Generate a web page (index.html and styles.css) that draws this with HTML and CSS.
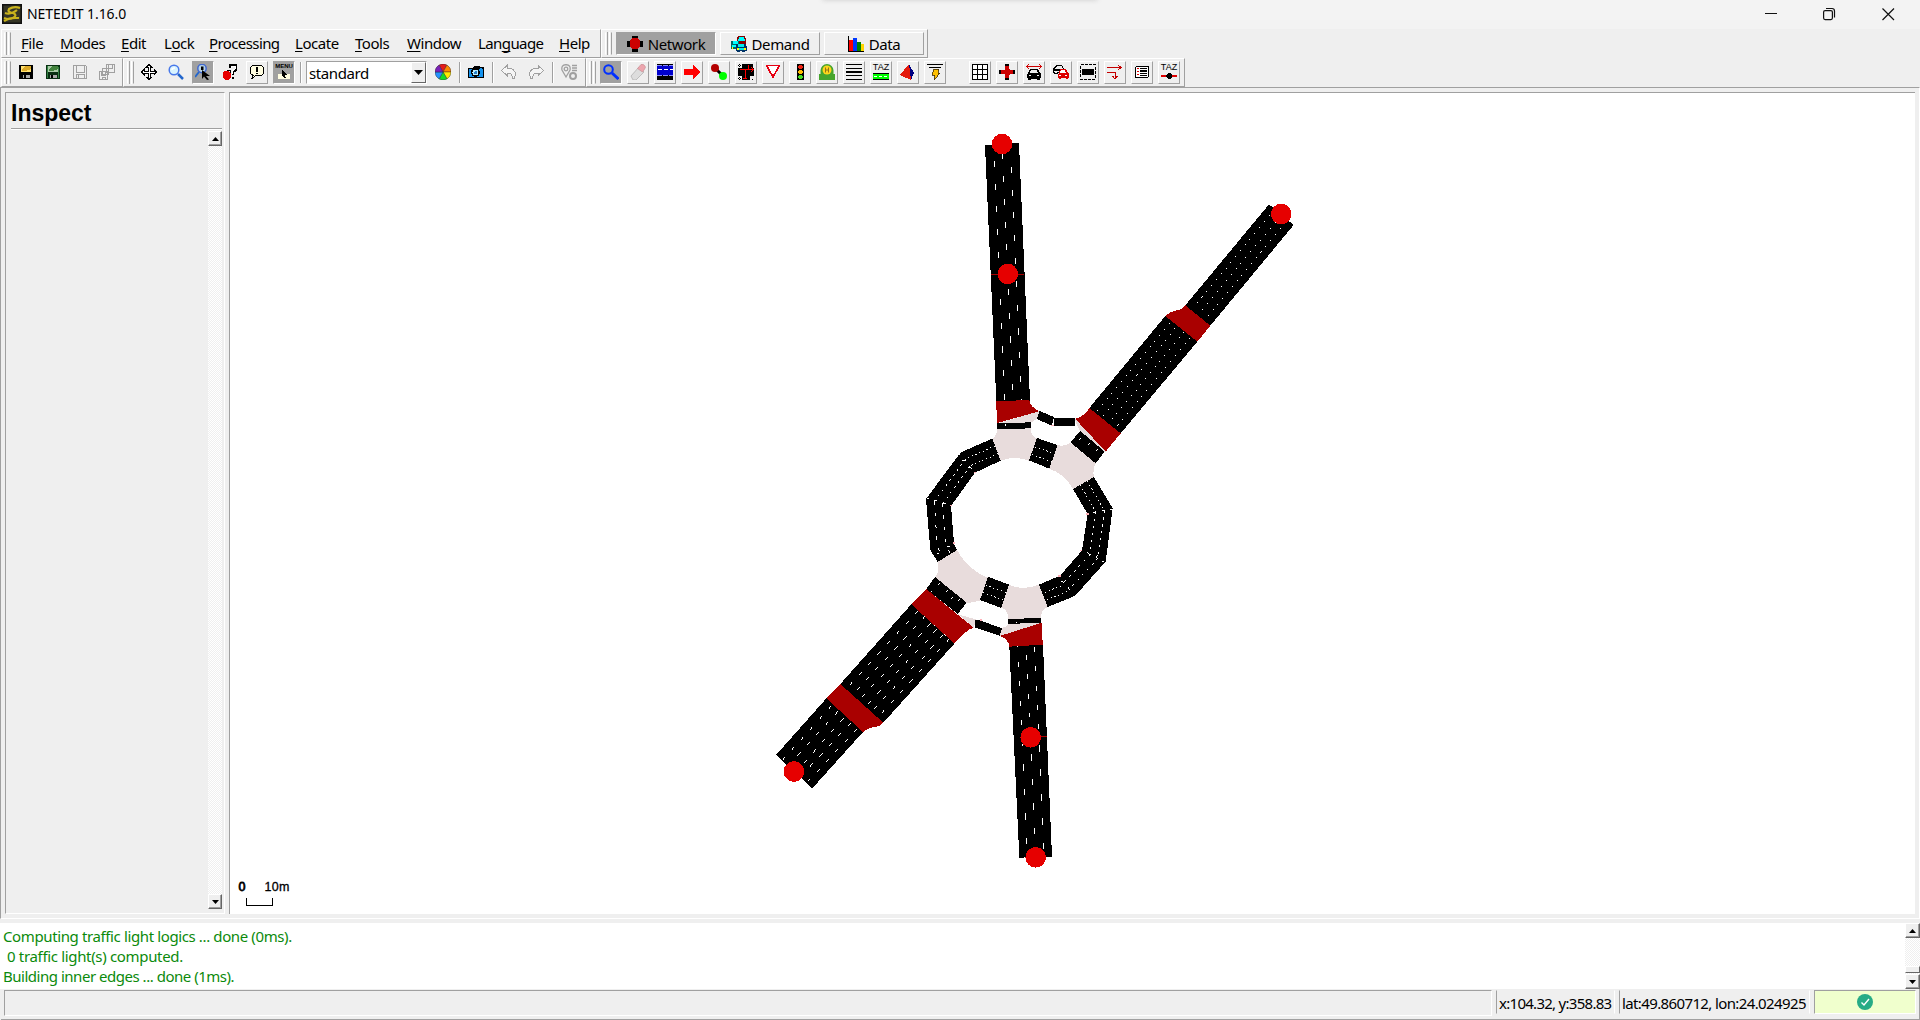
FILE: index.html
```html
<!DOCTYPE html>
<html lang="en">
<head>
<meta charset="utf-8">
<title>NETEDIT 1.16.0</title>
<link rel="stylesheet" href="styles.css">
</head>
<body>
<header class="titlebar">
  <svg class="logo" width="20" height="20" viewBox="0 0 20 20"><rect width="20" height="20" fill="#111"/><rect x="1.5" y="1.5" width="17" height="17" fill="#353525"/><path d="M18 4Q12 2 7 5Q5 8 11 9Q16 11 11 14Q7 16 2 14M3 9Q9 11 15 6M2 17Q8 13 17 14" fill="none" stroke="#c9b31c" stroke-width="2.200"/></svg>
  <span class="title">NETEDIT 1.16.0</span>
  <span class="top-hint"></span>
  <svg class="winctl" width="132" height="14" viewBox="0 0 132 14"><g fill="none" stroke="#111" stroke-width="1.2"><path d="M0 6.5H12" shape-rendering="crispEdges"/><rect x="58.6" y="3.6" width="8.8" height="9" rx="1.5"/><path d="M61 1.5H67Q69.5 1.5 69.5 4V10.500"/><path d="M117.500 1.500L129 13M129 1.500L117.500 13"/></g></svg>
</header>

<div class="row menus">
  <nav class="frame menu-frame">
    <i class="grip"></i>
    <span class="item file"><u>F</u>ile</span><span class="item modes"><u>M</u>odes</span><span class="item edit"><u>E</u>dit</span><span class="item lock">L<u>o</u>ck</span><span class="item processing"><u>P</u>rocessing</span><span class="item locate"><u>L</u>ocate</span><span class="item tools"><u>T</u>ools</span><span class="item window"><u>W</u>indow</span><span class="item language">Lan<u>g</u>uage</span><span class="item help"><u>H</u>elp</span>
  </nav>
  <div class="frame mode-frame">
    <i class="grip"></i>
    <div class="mode pressed"><svg width="16" height="16" viewBox="0 0 16 16" shape-rendering="crispEdges"><path d="M5 0h6v16H5zM0 5h16v6H0z"/><path d="M5 2h6v1h1v1h1v7h-1v1h-1v1H5v-1H4v-1H3V4h1V3h1z" fill="#c00"/></svg><span class="t-network">Network</span></div>
    <div class="mode"><svg width="16" height="16" viewBox="0 0 16 16" shape-rendering="crispEdges"><path d="M7 0h7l1 3v5H6V3z" fill="#800"/><path d="M8 1h5l1 4H7z" fill="#0ff"/><path d="M0 5h8v8H0z" fill="#066"/><path d="M2 5h5v3H2zM1 9h4v2H1z" fill="#0ff"/><path d="M5 8h10l1 3v4h-2v1h-3v-1H9v1H6v-1H5z" fill="#036"/><path d="M7 8h6v3H7zM8 12h5v2H8z" fill="#0ee"/><path d="M6 12h2v2H6zM13 12h2v2h-2zM1 11h1v2H1z" fill="#ff0"/></svg><span class="t-demand">Demand</span></div>
    <div class="mode"><svg width="16" height="16" viewBox="0 0 16 16" shape-rendering="crispEdges"><path d="M0 0h1v15h15v1H0z"/><path d="M1 4h4v11H1z" fill="red"/><path d="M5 2h4v13H5z" fill="#0037ff"/><path d="M9 6h4v9H9z" fill="#008000"/><path d="M13 8h3v7h-3z" fill="#ffd500"/></svg><span class="t-data">Data</span></div>
  </div>
</div>

<div class="row tools">
  <div class="frame file-tools">
    <i class="grip"></i>
    <b class="btn flat"><svg viewBox="0 0 16 16"><path d="M1 1h13l1 1v13H1z"/><path d="M3 2h10v6H3z" fill="#ffe071"/><path d="M4 5L8 2H13V5L8 7H4z" fill="#dba928"/><path d="M5 11h7v3H5z" fill="#aaa"/><path d="M6 11h2v3H6z"/></svg></b>
    <b class="btn flat"><svg viewBox="0 0 16 16"><path d="M1 1h13l1 1v13H1z" fill="#092f12"/><path d="M2 2h1v12H2zM13 3h1v11h-1z" fill="#338143"/><path d="M3 2h10v6H3z" fill="#a9cba7"/><path d="M4 5L8 2H13V5L8 7H4z" fill="#42833d"/><path d="M5 11h7v3H5z" fill="#aaa"/><path d="M6 11h2v3H6z"/></svg></b>
    <b class="btn flat"><svg viewBox="0 0 16 16"><path d="M1.500 1.500h12l1 1v12h-13zM4.500 2v6h8V2M4.500 14v-4h8v4M6.500 11v3" fill="#efefef" stroke="#a0a0a0"/></svg></b>
    <b class="btn flat"><svg viewBox="0 0 16 16"><path d="M7.500.500h8v8h-8zM9.500 1v3h4V1M3.500 4.500h6v6h-6zM.500 7.500h8v8h-8zM2.500 8v3h4V8M3.500 15v-2h3v2" fill="#efefef" stroke="#a0a0a0"/></svg></b>
  </div>
  <div class="frame view-tools">
    <i class="grip"></i>
    <b class="btn flat"><svg viewBox="0 0 16 16"><path d="M8 .500L10.500 3H9v4h4V5.500L15.500 8L13 10.500V9H9v4h1.500L8 15.500L5.500 13H7V9H3v1.500L.500 8L3 5.500V7h4V3H5.500z" fill="#fff" stroke="#000"/></svg></b>
    <b class="btn flat"><svg class="smooth" viewBox="0 0 16 16"><path d="M10 10l5 5" stroke="#26c" stroke-width="2.500"/><circle cx="6" cy="6" r="4.800" fill="#d8f4ff" stroke="#4878ea" stroke-width="1.500"/><path d="M4 6Q4 4 7 4" stroke="#fff" fill="none" stroke-width="1.500"/></svg></b>
    <b class="btn pressed"><svg class="smooth" viewBox="0 0 16 16"><path d="M4 8L0 13" stroke="#26c" stroke-width="2"/><circle cx="7" cy="4.500" r="4.200" fill="#b8d4e8" stroke="#4068d0" stroke-width="1.500"/><path d="M6 2.500h2.500V6H6z"/><path d="M7 6l8 6h-4l3 3.500-2 .500-3-3.500L7 15z"/></svg></b>
    <b class="btn flat"><svg viewBox="0 0 16 16"><path d="M8 4V1h6v5l-3 2v3M11 13v2" fill="none" stroke="#000" stroke-width="2"/><path d="M9 4V2h4v3l-3 2v3" fill="none" stroke="#fff"/><path d="M2 7h5l2 3v3l-2 3H3l-2-2V9z" fill="#e60000"/><path d="M5 6h3v3" fill="none" stroke="#000"/></svg></b>
    <b class="btn"><svg viewBox="0 0 16 16"><path d="M3.500 1.500h9l2 2v6l-2 2H7l-4 3 1-3-2.500-2v-6z" fill="#fffde0" stroke="#000"/><path d="M7 3h2v5H7zM7 9h2v1H7z"/></svg></b>
    <b class="btn pressed menu-btn"><span>MENU</span><svg viewBox="0 0 16 16"><path d="M2 10h12v5H2z" fill="#fffde0"/><path d="M6 6l5 5H9l1 3H8l-1-3-1 1z"/></svg></b>
    <i class="sep"></i>
    <div class="combo"><span>standard</span><b class="arrow"><svg width="9" height="5"><path d="M0 0h9L4.500 5z"/></svg></b></div>
    <b class="btn flat"><svg class="smooth" viewBox="0 0 16 16"><g stroke="#222" stroke-width=".4"><path d="M8 8L4 1.100A8 8 0 0 1 12 1.100z" fill="#e51b1b"/><path d="M8 8L12 1.100A8 8 0 0 1 16 8z" fill="#ff8a00"/><path d="M8 8H16A8 8 0 0 1 12 14.900z" fill="#ffe900"/><path d="M8 8L12 14.900A8 8 0 0 1 4 14.900z" fill="#15dc27"/><path d="M8 8L4 14.900A8 8 0 0 1 0 8z" fill="#2493ff"/><path d="M8 8H0A8 8 0 0 1 4 1.100z" fill="#7b20b8"/></g></svg></b>
    <i class="sep"></i>
    <b class="btn flat"><svg viewBox="0 0 16 16"><path d="M0 4h5l1-2h5l1 1h4v11H0z"/><path d="M1 5h14v8H1zM12 4h2v1h-2z" fill="#1593ee"/><circle cx="7.500" cy="8.500" r="4.500"/><circle cx="7.500" cy="8.500" r="3" fill="#b8edff"/><path d="M7 7h2v3H6z" fill="#2680c9"/></svg></b>
    <i class="sep"></i>
    <b class="btn flat"><svg viewBox="0 0 16 16"><path d="M.500 6.500L6 1.500V4q7 0 9 6l-2 4.500-2-.500q1-5-5-5v2.500z" fill="#f5f5f5" stroke="#a0a0a0"/></svg></b>
    <b class="btn flat"><svg viewBox="0 0 16 16"><path d="M15.500 6.500L10 1.500V4Q3 4 1 10l2 4.500 2-.500q-1-5 5-5v2.500z" fill="#f5f5f5" stroke="#a0a0a0"/></svg></b>
    <i class="sep"></i>
    <b class="btn flat"><svg class="smooth" viewBox="0 0 16 16"><g fill="none" stroke="#a0a0a0" stroke-width="1.300"><path d="M5 13L1 6Q0 1 5 .600Q10 1 9 6z"/><circle cx="5" cy="5" r="1.800"/><path d="M11 1.500h5M11 4h5M11 6.500h5"/><circle cx="12" cy="12" r="3" stroke-width="2"/></g></svg></b>
  </div>
  <div class="frame edit-tools">
    <i class="grip"></i>
    <b class="btn pressed"><svg viewBox="0 0 16 16" class="smooth"><circle cx="5.500" cy="5.500" r="4.300" fill="none" stroke="#0030ff" stroke-width="2"/><path d="M9 9l6.500 6" stroke="#0030ff" stroke-width="3"/></svg></b>
    <b class="btn"><svg class="smooth" viewBox="0 0 16 16"><path d="M1 12L9 3l5 5-8 8H3z" fill="#ddd" stroke="#aaa" stroke-width=".7"/><path d="M7.500 4.500L11 .500q3-1 4.500 2.500-.500 2-3 5z" fill="#eda6ae" stroke="#c98f95" stroke-width=".7"/></svg></b>
    <b class="btn"><svg viewBox="0 0 16 16"><path d="M0 0h16v16H0z"/><path d="M0 2h16v9H0z" fill="#0000cd"/><path d="M1 5.500h15" stroke="#fff" stroke-dasharray="4 2"/><path d="M0 1.500h16M0 11.500h16" stroke="#88f" stroke-dasharray="5 1"/></svg></b>
    <b class="btn"><svg viewBox="0 0 16 16"><path d="M0 5h9V1l7 7-7 7v-4H0z" fill="red"/></svg></b>
    <b class="btn"><svg class="smooth" viewBox="0 0 16 16"><path d="M4 4l8 8" stroke="#000" stroke-width="3"/><circle cx="4" cy="4" r="4" fill="#b40000"/><circle cx="12" cy="12" r="4" fill="#0f0"/></svg></b>
    <b class="btn"><svg viewBox="0 0 16 16"><path d="M0 4h4V0h11v4h1v8h-4v4H4v-4H0z"/><path d="M0 1h3M1 0v3M0 14h3M1 13v3M14 15h2" stroke="#000" stroke-dasharray="1 1"/><path d="M7.500 5v9M5 14.500h4M2 5.500h12M10.500 1v4M13 3l2 2.500-2 2.500" stroke="red" fill="none"/></svg></b>
    <b class="btn"><svg viewBox="0 0 16 16"><path d="M1.500 1.500h13L8 13z" fill="#fff" stroke="#e60012" stroke-width="1.700"/></svg></b>
    <b class="btn"><svg viewBox="0 0 16 16"><path d="M5 0h7v16H5z"/><circle cx="8.500" cy="3" r="2.200" fill="#e21"/><circle cx="8.500" cy="8" r="2.200" fill="#fb0"/><circle cx="8.500" cy="13" r="2.200" fill="#4d2"/></svg></b>
    <b class="btn"><svg class="smooth" viewBox="0 0 16 16"><path d="M0 10h16v6H0zM1.500 6.500a6.500 6.500 0 0 1 13 0v5h-13z" fill="#46a52d"/><circle cx="8" cy="6" r="4.500" fill="#ffd51c"/><path d="M6.500 3.500v5M9.500 3.500v5M6.500 6h3" stroke="#927519" fill="none"/></svg></b>
    <b class="btn"><svg viewBox="0 0 16 16"><path d="M0 0h16v1H0zM0 4h16v1H0zM0 7h16v2H0zM0 11h16v1H0zM0 15h16v1H0z"/></svg></b>
    <b class="btn taz"><span>TAZ</span><svg viewBox="0 0 16 16"><path d="M0 9h16v7H0z"/><path d="M0 10h16v5H0z" fill="#0f0"/><path d="M1 12.500h14" stroke="#fff" stroke-dasharray="3 2"/></svg></b>
    <b class="btn"><svg viewBox="0 0 16 16"><path d="M9 0l5 9-3 7z" fill="#000082"/><path d="M9 0L0 11l11 5z" fill="#e41a0c"/></svg></b>
    <b class="btn"><svg viewBox="0 0 16 16"><path d="M0 0h16v1H0zM2 3h12v1H2z"/><path d="M7 5h5l-1 4h2l-6 7 1-5H5z" fill="#ffc000" stroke="#402900" stroke-width=".8"/></svg></b>
    <i class="spacer"></i>
    <b class="btn"><svg viewBox="0 0 16 16"><path d="M0 0h16v16H0z"/><path d="M1 1h4v4H1zM6 1h4v4H6zM11 1h4v4h-4zM1 6h4v4H1zM6 6h4v4H6zM11 6h4v4h-4zM1 11h4v4H1zM6 11h4v4H6zM11 11h4v4h-4z" fill="#fff"/></svg></b>
    <b class="btn"><svg viewBox="0 0 16 16"><path d="M6 0h4v16H6zM0 6h16v4H0z"/><path d="M6 2h4v3l1 1h3v4h-3l-1 1v3H6v-3l-1-1H2V6h3l1-1z" fill="#c00"/></svg></b>
    <b class="btn"><svg viewBox="0 0 16 16"><path d="M1 2.500h14M3 0L.500 2.500 3 5M13 0l2.500 2.500L13 5" fill="none" stroke="#d00000"/><path d="M4 5h8l2 4 1 1v4h-1v2h-3v-1H5v1H2v-2H1v-4l1-1z"/><path d="M5 6h6l1 3H4zM3 11h2v1H3zM11 11h2v1h-2z" fill="#efefef"/></svg></b>
    <b class="btn"><svg viewBox="0 0 16 16"><path d="M.500 7.500v-3l2-1 1-2h5l2 3v4h-6v1h-3z" fill="#efefef" stroke="#000"/><path d="M1 5h7v2H1z"/><path d="M7 5h6l2 4 1 1v4h-1v1h-2v-1H8v1H6v-1H5v-4l1-1z" fill="#d00"/><path d="M8 6h4l1 3H7zM6 11h2v1H6zM12 11h2v1h-2z" fill="#fff"/></svg></b>
    <b class="btn"><svg viewBox="0 0 16 16"><path d="M.500.500h15v15H.500z" fill="none" stroke="#000" stroke-dasharray="3 1.300"/><path d="M2 5h12v6H2z"/></svg></b>
    <b class="btn"><svg viewBox="0 0 16 16"><path d="M0 3.500h13M11 1l3 2.500L11 6M0 8.500h8v6M5.500 12L8 15l2.500-3" fill="none" stroke="#c40000"/></svg></b>
    <b class="btn"><svg viewBox="0 0 16 16"><rect x="1.500" y="2.500" width="13" height="11" rx="1.500" fill="#fff" stroke="#000"/><path d="M3 4h2v1H3zM3 7h2v1H3zM3 10h2v1H3z" fill="#d00"/><path d="M6 4h7v1H6zM6 6h7v2H6zM6 9h7v1H6zM6 11h7v1H6z"/></svg></b>
    <b class="btn taz"><span>TAZ</span><svg viewBox="0 0 16 16"><path d="M0 11h16v2H0z" fill="#d00"/><path d="M7 9h2l2 2v2l-2 2H7l-2-2v-2z"/></svg></b>
  </div>
</div>

<main class="main">
  <aside class="panel">
    <h1>Inspect</h1>
    <div class="panel-body">
      <div class="scroll">
        <b class="sbtn"><svg width="7" height="4"><path d="M3.500 0L7 4H0z"/></svg></b>
        <b class="sbtn"><svg width="7" height="4"><path d="M0 0h7L3.500 4z"/></svg></b>
      </div>
    </div>
  </aside>
  <section class="canvas">
    <svg width="1685" height="820" viewBox="230 93 1685 820" shape-rendering="crispEdges">
      <!-- north and north-east arms -->
      <g transform="translate(960 120) scale(.33333)">
        <path d="M75 75L177 69L210 842L109 845z"/>
        <path d="M927 253L1001 315L751 617L676 556zM616 588L712 665L482 940L388 864z"/>
        <path class="red" d="M616 588Q638 570 655 571Q668 566 676 556L751 617L712 665z"/>
        <path class="junction-line" d="M94 463H192"/>
        <g class="lane">
          <path stroke-dasharray="18 50.300" d="M103 123L115 420M127 100L139 390M155 141L167 436"/>
          <path stroke-dasharray="19 52" d="M121 537L134 842M145 507L157 815M169 483L184 842"/>
          <path stroke-dasharray="4 18.500" d="M928 286L699 565M946 307L715 583M962 325L734 602"/>
          <path stroke-dasharray="4 18.500" d="M628 610L402 883M646 624L425 895M672 635L445 910M690 653L470 920"/>
        </g>
      </g>
      <!-- roundabout, upper half -->
      <g transform="translate(900 380) scale(.33333)">
        <path class="junction" d="M291 145H393Q391 167 411 176L387 243Q345 225 302 242L275 178Q291 170 291 145z"/>
        <path class="junction" d="M473 195Q492 202 511 188L587 250Q577 268 582 293L519 327Q492 281 448 266z"/>
        <path class="junction" d="M171 510Q205 570 264 593L240 662L200 670L105 592Q120 577 113 546z"/>
        <path class="junction" d="M417 94L292 130L393 127L412 117zM526 117L527 129L541 153L610 215L617 215z"/>
        <path d="M277 176L182 217L78 357L91 510L113 546L171 510L162 490L153 378L225 278L302 242z"/>
        <path d="M582 291L638 385L617 545L525 648L443 681L417 614L480 587L546 512L563 402L519 327z"/>
        <path d="M411 174L473 195L448 266L387 241zM264 590L327 614L304 684L240 660z"/>
        <path d="M541 153L614 215L587 250L511 187z"/>
        <path d="M291 130L393 127V145L291 148zM419 93L462 111L456 137L410 117zM462 114H526V137H462z"/>
        <path class="red" d="M288 64L388 60Q392 82 417 94L292 129z"/>
        <path class="red" d="M568 84L662 160L617 215L526 117Q554 108 568 84z"/>
        <g class="lane">
          <path stroke-dasharray="4 8" d="M285 198L197 237M294 220L211 258M405 201L463 221M396 223L455 245M257 616L318 637M249 638L311 660M435 637L492 614M441 659L507 633"/>
          <path stroke-dasharray="6 13" d="M197 237L103 364M211 258L128 371"/>
          <path stroke-dasharray="10 25" d="M103 364L112 500L132 534M128 371L138 495L151 522"/>
          <path stroke-dasharray="4 9" d="M561 303L613 391M540 315L588 396"/>
          <path stroke-dasharray="7 14" d="M613 391L594 535M588 396L570 524M594 535L507 628M570 524L492 607"/>
          <path stroke-dasharray="8 18" d="M543 174L531 188M570 190L558 204M594 207L584 219"/>
          <path d="M316 131v8M101 361h9M127 371h10M605 393h10M579 397h9M561 518l8 5M588 534l5-8M187 240l10 3M205 261l10 4M484 603l8 6M504 622l6 8M111 522l7-2M140 499l9-1M176 222l5 4M80 355l8 2M630 387l8 2M605 543l6 3M518 648l5 2"/>
        </g>
        <path class="pink" d="M454 137h8M222 278h6M150 377h5M160 490h5M558 402h9M541 512h6M474 588h8"/>
      </g>
      <!-- roundabout, lower half -->
      <g transform="translate(900 540) scale(.33333)">
        <path class="junction" d="M327 134Q370 153 417 134L443 201Q420 213 424 234L324 237Q325 208 304 204z"/>
        <path class="junction" d="M173 222L195 229L228 238L221 263zM299 288L306 263Q320 262 324 251L426 248z"/>
        <path d="M105 111L200 188L173 222L79 147zM225 240L243 242L306 265L299 287L225 263zM324 237L423 234V248L324 252z"/>
        <path class="red" d="M79 147L34 194L163 310Q200 268 221 263L173 224z"/>
        <path class="red" d="M426 248L428 315L328 320Q327 298 299 288z"/>
        <path class="lane" stroke-dasharray="9 60" d="M119 129l-8 8M144 150l-8 8M160 170l-8 8M180 178l-8 8M96 152l-5 5M349 245v5"/>
        <path class="pink" d="M240 240h5"/>
      </g>
      <!-- south-west arm -->
      <g transform="translate(760 560) scale(.33333)">
        <path d="M48 585L157 685L309 516L199 415zM241 372L370 488L583 251L454 133z"/>
        <path class="red" d="M199 415L241 372L370 488Q360 499 343 501Q320 505 309 516z"/>
        <g class="lane">
          <path stroke-dasharray="13 28.500" d="M214 438L67 601M234 454L88 615M251 475L110 633M272 489L132 639M292 506L145 663"/>
          <path stroke-dasharray="13 28.500" d="M474 152L260 385M496 168L280 402M512 190L299 419M530 208L317 439M549 226L335 454M569 236L355 470"/>
        </g>
      </g>
      <!-- south arm -->
      <g transform="translate(960 600) scale(.33333)">
        <path d="M148 140L249 134L276 770L178 773z"/>
        <path class="junction-line" d="M240 409H261"/>
        <g class="lane">
          <path stroke-dasharray="15 43" d="M172 138v4M175 186L184 376M199 165L208 351M223 141L235 387"/>
          <path stroke-dasharray="20 53.500" d="M187 432v6M190 493L199 732M214 463L223 703M238 435L250 748"/>
        </g>
      </g>
      <g class="nodes"><circle cx="1002" cy="144" r="10.200"/><circle cx="1007.800" cy="274" r="10.200"/><circle cx="1281.300" cy="214" r="10.300"/><circle cx="794" cy="771.500" r="10.300"/><circle cx="1030.700" cy="737.300" r="10.300"/><circle cx="1035.700" cy="857.300" r="10.300"/></g>
      <path d="M246.500 898V905.500H272.500V898" fill="none" stroke="#000"/>
      <g class="scale-text"><text class="zero" x="238.500" y="891">0</text><text x="264.500" y="891" textLength="25">10m</text></g>
    </svg>
  </section>
</main>

<section class="log">
  <div class="log-text"><p class="l1">Computing traffic light logics ... done (0ms).</p><p class="l2">0 traffic light(s) computed.</p><p class="l3">Building inner edges ... done (1ms).</p></div>
  <div class="scroll log-scroll">
    <b class="sbtn"><svg width="7" height="4"><path d="M3.500 0L7 4H0z"/></svg></b>
    <b class="thumb"></b>
    <b class="sbtn"><svg width="7" height="4"><path d="M0 0h7L3.500 4z"/></svg></b>
  </div>
</section>

<footer class="status">
  <div class="cell message"></div>
  <div class="cell xy"><span>x:104.32, y:358.83</span></div>
  <div class="cell geo"><span>lat:49.860712, lon:24.024925</span></div>
  <div class="cell ok"><svg width="16" height="16" viewBox="0 0 16 16"><circle cx="8" cy="8" r="8" fill="#26ab86"/><path d="M4.500 8.500L7 11l5-6" fill="none" stroke="#fff" stroke-width="1.400"/></svg></div>
</footer>
</body>
</html>
```
FILE: styles.css
```css
* { box-sizing: border-box; }
body {
  margin: 0; width: 1920px; height: 1020px; overflow: hidden;
  display: flex; flex-direction: column;
  background: #efefef; color: #000;
  font: 15px/20px "Noto Sans", "Open Sans", sans-serif;
}
.titlebar { height: 29px; flex: none; background: #f3f3f3; display: flex; align-items: center; padding: 0 23px 1px 2px; position: relative; }
.title { margin-left: 5px; font-size: 14px; letter-spacing: -.05px; white-space: nowrap; }
.winctl { margin-left: auto; }
.top-hint { position: absolute; left: 822px; top: -6px; width: 276px; height: 6px; border-radius: 4px; box-shadow: 0 0 5px #ccc; }

.row { display: flex; flex: none; height: 29px; padding-left: 1px; }
.frame { display: flex; align-items: flex-start; border: 1px solid; border-color: #fff #a0a0a0 #a0a0a0 #fff; height: 29px; padding: 2px 0 0 2px; }
.grip { width: 7px; height: 23px; flex: none; margin-right: 4px; border: 1px solid; border-color: transparent #a0a0a0 transparent #fff;
  background: linear-gradient(90deg, #efefef 0 1px, #a0a0a0 1px 2px, #efefef 2px 3px, #fff 3px 4px, #efefef 4px); }
.menu-frame { width: 600px; }
.mode-frame { width: 327px; padding-left: 3px; }
.item { white-space: nowrap; line-height: 22px; letter-spacing: -.45px; flex: none; }
.item u { text-underline-offset: 2px; text-decoration-thickness: 1px; text-decoration-skip-ink: none; }
.file { margin-left: 6px; width: 39px; }
.modes { width: 61px; }
.edit { width: 43px; }
.lock { width: 45px; }
.processing { width: 86px; letter-spacing: -.6px; }
.locate { width: 60px; }
.item.tools { width: 52px; }
.window { width: 71px; }
.language { width: 81px; letter-spacing: -.6px; }
.mode { width: 100px; height: 23px; margin-right: 4px; flex: none; display: flex; align-items: center; justify-content: center; gap: 5px; border: 1px solid; border-color: #fff #a0a0a0 #a0a0a0 #fff; letter-spacing: -.4px; }
.mode svg { flex: none; }
.pressed, .mode.pressed { background: #a0a0a0; border-color: #a0a0a0 #fff #fff #a0a0a0; }

.file-tools { width: 122px; }
.view-tools { width: 463px; padding-left: 3px; }
.edit-tools { width: 599px; }
.row.tools .frame { gap: 5px; }
.row.tools .grip { margin-right: -1px; }
.btn { width: 22px; height: 23px; flex: none; display: flex; align-items: center; justify-content: center; border: 1px solid; border-color: #fff #a0a0a0 #a0a0a0 #fff; position: relative; }
.btn.pressed { border-color: #a0a0a0 #fff #fff #a0a0a0; }
.btn.flat { border-color: transparent; }
.btn svg { width: 16px; height: 16px; margin-bottom: 1px; flex: none; shape-rendering: crispEdges; }
.btn svg.smooth { shape-rendering: auto; }
.btn span { position: absolute; left: -1px; width: 22px; text-align: center; }
.menu-btn span { top: 1px; font: bold 6px/7px "Liberation Sans", sans-serif; }
.taz span { top: 1px; font: 9px/9px "Liberation Sans", sans-serif; }
.sep { width: 1px; height: 21px; margin-top: 1px; background: #a0a0a0; box-shadow: 1px 0 #fff; flex: none; }
.spacer { width: 13px; flex: none; }
.combo { width: 121px; height: 23px; flex: none; background: #fff; border: 1px solid; border-color: #a0a0a0 #fff #fff #a0a0a0; display: flex; justify-content: space-between; padding-left: 2px; line-height: 22px; letter-spacing: -.4px; }
.arrow { width: 15px; height: 21px; background: #efefef; border: 1px solid; border-color: #fff #666 #666 #fff; display: flex; align-items: center; justify-content: center; }

.main { height: 832px; flex: none; display: flex; gap: 4px; padding: 4px 4px 0 4px; border: 1px solid; border-color: #a0a0a0 #fff #fff #a0a0a0; }
.panel { width: 220px; height: 822px; border: 1px solid; border-color: #a0a0a0 #fff #fff #a0a0a0; display: flex; flex-direction: column; padding: 2px 2px 4px 5px; }
.panel h1 { margin: 0; height: 34px; font: bold 23px/36px "Liberation Sans", Arial, sans-serif; border-bottom: 1px solid #a0a0a0; box-shadow: 0 1px #fff; }
.panel-body { flex: 1; display: flex; justify-content: flex-end; padding-top: 2px; }
.scroll { width: 14px; display: flex; flex-direction: column; justify-content: space-between; background: repeating-conic-gradient(#fff 0 25%, #efefef 0 50%) 0 0 / 2px 2px; }
.sbtn { height: 15px; display: flex; align-items: center; justify-content: center; background: #efefef; border: 1px solid; border-color: #fff #666 #666 #fff; box-shadow: inset -1px -1px #a0a0a0; }
.canvas { flex: 1; height: 822px; background: #fff; border-left: 1px solid #a0a0a0; border-top: 1px solid #a0a0a0; }
.canvas svg { display: block; }
.red { fill: #a90000; }
.junction { fill: #e8dcdc; }
.junction-line { stroke: #a90000; stroke-width: 3; }
.lane { stroke: #fff; stroke-width: 3; fill: none; }
.pink { stroke: #ffb0b8; stroke-width: 5; }
.nodes { fill: #e60000; }
.scale-text { font: 12.500px "Liberation Sans", Arial, sans-serif; stroke: #000; stroke-width: .3; }
.zero { stroke-width: .8; }

.log { height: 66px; flex: none; margin-top: 4px; background: #fff; display: flex; justify-content: space-between; color: #0b8a0b; }
.log-text { padding: 3px 0 0 3px; }
.log p { margin: 0; white-space: pre; letter-spacing: -.38px; }
.log .l2 { padding-left: 4px; letter-spacing: -.33px; }
.log .l3 { letter-spacing: -.48px; }
.log-scroll { width: 15px; }
.log-scroll .thumb { height: 7px; margin-top: 26px; background: #efefef; border: 1px solid; border-color: #fff #666 #666 #fff; }

.status { height: 31px; flex: none; display: flex; padding: 1px 3px 0 4px; margin-left: 1px; border-right: 1px solid #a0a0a0; border-bottom: 1px solid #a0a0a0; }
.cell { height: 24px; border: 1px solid; border-color: #a0a0a0 #fff #fff #a0a0a0; margin-right: 4px; line-height: 24px; white-space: nowrap; padding-left: 2px; letter-spacing: -.62px; }
.message { width: 1488px; height: 26px; margin-left: -1px; }
.xy { width: 119px; letter-spacing: -.72px; border-top-color: transparent; border-bottom-color: transparent; }
.geo { width: 191px; border-top-color: transparent; border-bottom-color: transparent; }
.ok { width: 102px; margin: 0; background: #f0ffcd; display: flex; align-items: center; justify-content: center; padding: 0; }
```
